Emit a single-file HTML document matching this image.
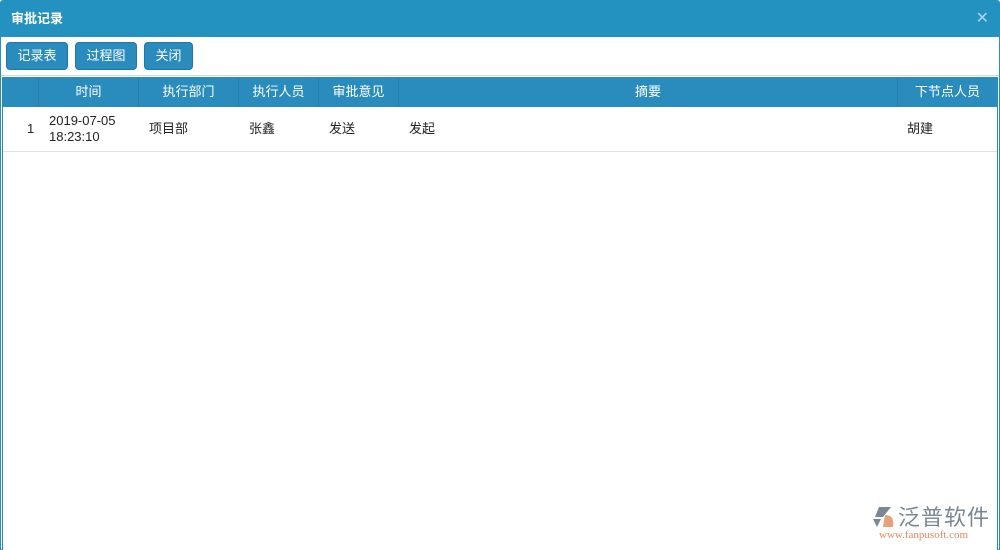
<!DOCTYPE html>
<html><head><meta charset="utf-8"><style>
*{margin:0;padding:0;box-sizing:border-box}
body{width:1000px;height:550px;background:#fff;font-family:"Liberation Sans","Noto Sans CJK SC",sans-serif;font-size:13px;overflow:hidden;position:relative}
.win{position:absolute;left:0;top:0;width:1000px;height:550px;border:1px solid #2492c0;border-radius:3px 3px 0 0;background:#fff}
.title{position:absolute;left:0;top:0;width:998px;height:36px;background:#2492c0;color:#fff;font-weight:bold;font-size:13px;line-height:36px;padding-left:10px}
.x{position:absolute;right:10px;top:0;color:#a9d3ea;font-size:16px;font-weight:normal}
.btn{position:absolute;top:41px;height:28px;background:#2a8bbd;color:#fff;border-radius:4px;border:1px solid #1f78a6;text-align:center;line-height:26px;font-size:13px}
.sep{position:absolute;left:0;top:74px;width:998px;height:1px;background:#c9dbe6}
.tbl{position:absolute;left:1px;top:76px;width:996px;height:473px;border:1px solid #2a8bbd;border-bottom:none;background:#fff}
.hd{position:absolute;left:0;top:0;width:994px;height:29px;background:#2a8bbd;color:#fff}
.hd div{position:absolute;top:0;height:29px;line-height:28px;text-align:center;border-right:1px solid #2580ae}
.row{position:absolute;left:0;top:29px;width:994px;height:45px;border-bottom:1px solid #dde3e8;color:#222}
.row div{position:absolute;top:0;height:44px}
</style></head><body>
<div class="win">
<div class="title">审批记录<span class="x">✕</span></div>
<div class="btn" style="left:5px;width:62px">记录表</div>
<div class="btn" style="left:74px;width:62px">过程图</div>
<div class="btn" style="left:143px;width:49px">关闭</div>
<div class="sep"></div>
<div class="tbl">
<div class="hd">
<div style="left:0;width:36px"></div>
<div style="left:36px;width:100px">时间</div>
<div style="left:136px;width:100px">执行部门</div>
<div style="left:236px;width:80px">执行人员</div>
<div style="left:316px;width:80px">审批意见</div>
<div style="left:396px;width:499px">摘要</div>
<div style="left:895px;width:99px;border:none">下节点人员</div>
</div>
<div class="row">
<div style="left:24px;line-height:44px">1</div>
<div style="left:46px;top:6px;line-height:16px">2019-07-05<br>18:23:10</div>
<div style="left:146px;line-height:44px">项目部</div>
<div style="left:246px;line-height:44px">张鑫</div>
<div style="left:326px;line-height:44px">发送</div>
<div style="left:406px;line-height:44px">发起</div>
<div style="left:904px;line-height:44px">胡建</div>
</div>
</div>
<div style="position:absolute;left:870px;top:502px;width:125px;height:40px">
<svg width="26" height="24" style="position:absolute;left:0;top:2px"><path d="M8 2 L20 2 L12 12 L4 12 Z" fill="#7a8794"/><path d="M2 14 L10 14 L6 22 Z" fill="#7a8794"/><path d="M14 10 Q24 10 22 22 L12 22 Z" fill="#e7a17a"/></svg>
<div style="position:absolute;left:27px;top:0;font-size:22px;line-height:26px;color:#7a8794;font-family:'Noto Sans CJK SC',sans-serif;letter-spacing:1px">泛普软件</div>
<div style="position:absolute;left:8px;top:26px;font-size:11px;line-height:12px;color:#e08a5e;font-family:'Liberation Serif',serif">www.fanpusoft.com</div>
</div>
</div>
</body></html>
